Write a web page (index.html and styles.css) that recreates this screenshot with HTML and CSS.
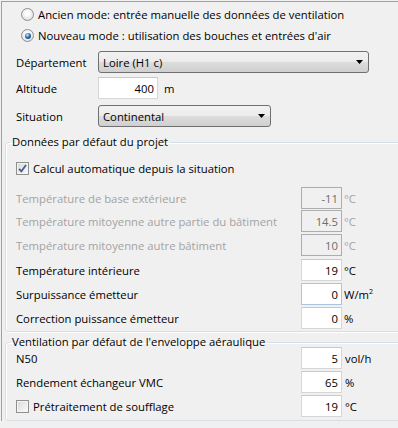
FILE: index.html
```html
<!DOCTYPE html>
<html lang="fr">
<head>
    <meta charset="UTF-8">
    <title>Ventilation</title>
    <link rel="stylesheet" href="styles.css">
</head>
<body>
    <div class="panel">
        <div class="mode-row first">
            <span class="radio"></span>
            <span class="mode-text">Ancien mode: entrée manuelle des données de ventilation</span>
        </div>
        <div class="mode-row">
            <span class="radio checked"></span>
            <span class="mode-text">Nouveau mode : utilisation des bouches et entrées d'air</span>
        </div>

        <div class="field-row row-dept">
            <label>Département</label>
            <div class="combo combo-dept">
                <span>Loire (H1 c)</span>
                <svg width="7" height="4" viewBox="0 0 7 4"><path d="M0 0h7L3.5 4z" fill="#000"/></svg>
            </div>
        </div>
        <div class="field-row row-alt">
            <label>Altitude</label>
            <input class="textbox box-alt" type="text" value="400" readonly>
            <span class="unit unit-m">m</span>
        </div>
        <div class="field-row row-sit">
            <label>Situation</label>
            <div class="combo combo-sit">
                <span>Continental</span>
                <svg width="7" height="4" viewBox="0 0 7 4"><path d="M0 0h7L3.5 4z" fill="#000"/></svg>
            </div>
        </div>

        <fieldset class="group group-project">
            <legend>Données par défaut du projet</legend>
            <div class="check-row">
                <span class="checkbox checked">
                    <svg width="11" height="11" viewBox="0 0 11 11"><path d="M2 5.8l2.4 2.6L9 2" fill="none" stroke="#4b5f96" stroke-width="1.8"/></svg>
                </span>
                <span>Calcul automatique depuis la situation</span>
            </div>

            <div class="value-row disabled r1">
                <span class="value-label">Température de base extérieure</span>
                <input class="textbox" type="text" value="-11" disabled>
                <span class="unit">°C</span>
            </div>
            <div class="value-row disabled r2">
                <span class="value-label">Température mitoyenne autre partie du bâtiment</span>
                <input class="textbox" type="text" value="14.5" disabled>
                <span class="unit">°C</span>
            </div>
            <div class="value-row disabled r3">
                <span class="value-label">Température mitoyenne autre bâtiment</span>
                <input class="textbox" type="text" value="10" disabled>
                <span class="unit">°C</span>
            </div>
            <div class="value-row r4">
                <span class="value-label">Température intérieure</span>
                <input class="textbox" type="text" value="19" readonly>
                <span class="unit">°C</span>
            </div>
            <div class="value-row r5">
                <span class="value-label">Surpuissance émetteur</span>
                <input class="textbox hover" type="text" value="0" readonly>
                <span class="unit">W/m<sup>2</sup></span>
            </div>
            <div class="value-row r6">
                <span class="value-label">Correction puissance émetteur</span>
                <input class="textbox" type="text" value="0" readonly>
                <span class="unit">%</span>
            </div>
        </fieldset>

        <fieldset class="group group-vent">
            <legend>Ventilation par défaut de l'enveloppe aéraulique</legend>
            <div class="value-row v1">
                <span class="value-label">N50</span>
                <input class="textbox" type="text" value="5" readonly>
                <span class="unit wide">vol/h</span>
            </div>
            <div class="value-row v2">
                <span class="value-label">Rendement échangeur VMC</span>
                <input class="textbox" type="text" value="65" readonly>
                <span class="unit wide">%</span>
            </div>
            <div class="value-row v3">
                <span class="value-label">
                    <span class="checkbox"></span>
                    <span>Prétraitement de soufflage</span>
                </span>
                <input class="textbox" type="text" value="19" readonly>
                <span class="unit wide">°C</span>
            </div>
        </fieldset>
    </div>
</body>
</html>
```

FILE: styles.css
```css
* {
    margin: 0;
    padding: 0;
    box-sizing: border-box;
}

body {
    background-color: #f0f0f0;
    font-family: "Open Sans", Arial, sans-serif;
    font-size: 11.3px;
    color: #000;
    overflow: hidden;
}

.panel {
    width: 397px;
    margin: 1px 0 0 1px;
    border-top: 1px solid #a0a0a0;
    border-left: 1px solid #a0a0a0;
    padding-top: 2px;
    overflow: hidden;
}

/* radio rows */
.mode-row {
    display: flex;
    align-items: center;
    height: 21px;
    padding-left: 19px;
}

.radio {
    width: 13px;
    height: 13px;
    border-radius: 50%;
    border: 1px solid #8e8f8f;
    background: radial-gradient(circle at 50% 40%, #ffffff 20%, #d8d8d8 90%);
    display: flex;
    align-items: center;
    justify-content: center;
    margin-right: 4px;
    flex-shrink: 0;
}

.radio.checked::after {
    content: "";
    width: 6px;
    height: 6px;
    border-radius: 50%;
    background: radial-gradient(circle at 40% 35%, #a8dcff 10%, #2b6cb0 45%, #13365c 100%);
}

/* top fields */
.field-row {
    display: flex;
    align-items: center;
    height: 22px;
    padding-left: 14px;
}

.field-row label {
    width: 82px;
    flex-shrink: 0;
}

.row-dept {
    margin-top: 5px;
}

.row-alt {
    margin-top: 4px;
}

.row-sit {
    margin-top: 6px;
}

.combo {
    height: 22px;
    display: flex;
    align-items: center;
    justify-content: space-between;
    padding: 0 5px 0 4px;
    border: 1px solid #707070;
    border-radius: 3px;
    background: linear-gradient(#f2f2f2 0%, #ebebeb 50%, #dddddd 51%, #cfcfcf 100%);
    flex-shrink: 0;
}

.combo-dept {
    width: 271px;
}

.combo-sit {
    width: 173px;
}

.textbox {
    width: 41px;
    height: 22px;
    font: inherit;
    color: #000;
    text-align: right;
    padding-right: 3px;
    background-color: #fff;
    border: 1px solid #d6d6d6;
    border-top-color: #c9c9c9;
    outline: none;
    flex-shrink: 0;
}

.textbox.hover {
    border-color: #a9c5e3;
}

.box-alt {
    width: 60px;
}

.unit {
    margin-left: 2px;
    white-space: nowrap;
}

.unit-m {
    margin-left: 6px;
}

.unit.wide {
    margin-left: 3px;
}

.unit sup {
    font-size: 7px;
    vertical-align: 5px;
}

/* group boxes */
.group {
    margin-left: 3px;
    margin-right: -6px;
    border: 1px solid #d5dfe5;
    border-radius: 3px;
    box-shadow: inset 1px 1px 0 #fff, 1px 1px 0 #fff;
    padding: 0 0 2px 0;
}

.group legend {
    margin-left: 4px;
    padding: 0 2px;
    line-height: 14px;
}

.group-project {
    margin-top: 8px;
}

.group-vent {
    margin-top: 3px;
    padding-bottom: 3px;
}

.check-row {
    display: flex;
    align-items: center;
    height: 22px;
    margin-top: 8px;
    padding-left: 10px;
}

.checkbox {
    width: 13px;
    height: 13px;
    border: 1px solid #8e8f8f;
    background: linear-gradient(135deg, #d8d8d8, #fbfbfb);
    box-shadow: inset 0 0 0 1px #f4f4f4;
    margin-right: 4px;
    display: flex;
    align-items: center;
    justify-content: center;
    flex-shrink: 0;
}

.value-row {
    display: flex;
    align-items: center;
    height: 22px;
    padding-left: 10px;
}

.value-label {
    width: 285px;
    flex-shrink: 0;
    display: flex;
    align-items: center;
}

.value-row.disabled .value-label,
.value-row.disabled .unit {
    color: #a3a3a3;
}

.value-row.disabled .textbox {
    background-color: #f0f0f0;
    border-color: #adadad;
    color: #6d6d6d;
}

.r1 { margin-top: 8px; }
.r2 { margin-top: 1px; }
.r3 { margin-top: 2px; }
.r4 { margin-top: 3px; }
.r5 { margin-top: 2px; }
.r6 { margin-top: 2px; }

.v1 { margin-top: -2px; }
.v2 { margin-top: 2px; }
.v3 { margin-top: 2px; }
```
